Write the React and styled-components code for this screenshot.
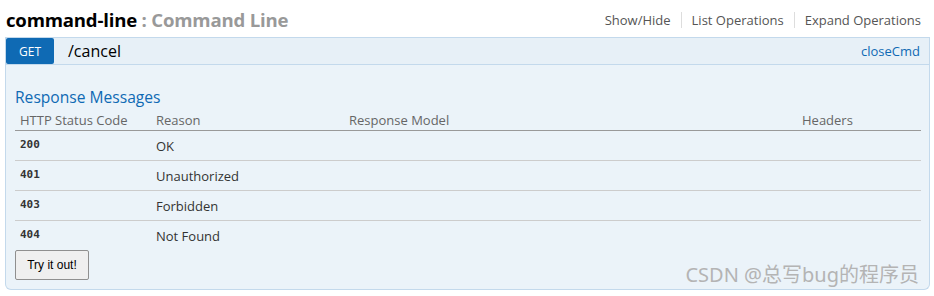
import React from 'react';
import styled, { createGlobalStyle } from 'styled-components';

const GlobalStyle = createGlobalStyle`
  body {
    margin: 0;
    background: #fff;
    font-family: "Open Sans", "Noto Sans", sans-serif;
  }
`;

const responses = [
  { code: '200', reason: 'OK' },
  { code: '401', reason: 'Unauthorized' },
  { code: '403', reason: 'Forbidden' },
  { code: '404', reason: 'Not Found' },
];

const App = () => {
  return (
    <Page>
      <GlobalStyle />
      <ResourceHeader>
        <Title>
          command-line <TitleDesc>: Command Line</TitleDesc>
        </Title>
        <Options>
          <OptionLink>Show/Hide</OptionLink>
          <OptionLink>List Operations</OptionLink>
          <OptionLink>Expand Operations</OptionLink>
        </Options>
      </ResourceHeader>

      <Operation>
        <OpHeading>
          <Method>GET</Method>
          <Path>/cancel</Path>
          <Summary>closeCmd</Summary>
        </OpHeading>
        <OpContent>
          <SectionTitle>Response Messages</SectionTitle>
          <Table>
            <colgroup>
              <col style={{ width: 136 }} />
              <col style={{ width: 193 }} />
              <col style={{ width: 453 }} />
              <col />
            </colgroup>
            <thead>
              <tr>
                <Th>HTTP Status Code</Th>
                <Th>Reason</Th>
                <Th>Response Model</Th>
                <Th>Headers</Th>
              </tr>
            </thead>
            <tbody>
              {responses.map((r, i) => (
                <Row key={r.code} $last={i === responses.length - 1}>
                  <CodeCell>{r.code}</CodeCell>
                  <Td>{r.reason}</Td>
                  <Td />
                  <Td />
                </Row>
              ))}
            </tbody>
          </Table>
          <Footer>
            <TryButton>Try it out!</TryButton>
            <Watermark>CSDN @总写bug的程序员</Watermark>
          </Footer>
        </OpContent>
      </Operation>
    </Page>
  );
};

const Page = styled.div`
  width: 926px;
  padding: 4px 4px 0 5px;
`;

const ResourceHeader = styled.div`
  display: flex;
  align-items: center;
  justify-content: space-between;
  height: 30px;
  padding: 0 10px 0 1px;
  margin-bottom: 3px;
`;

const Title = styled.h2`
  margin: 0;
  font-size: 18.6px;
  font-weight: 700;
  color: #000;
  letter-spacing: -0.2px;
`;

const TitleDesc = styled.span`
  color: #999;
`;

const Options = styled.div`
  display: flex;
  align-items: center;
  padding-top: 2px;
`;

const OptionLink = styled.a`
  font-size: 13px;
  color: #555;
  padding: 0 10px;
  border-left: 1px solid #ddd;
  line-height: 16px;

  &:first-child {
    border-left: none;
  }
  &:last-child {
    padding-right: 0;
  }
`;

const Operation = styled.div`
  width: 925px;
`;

const OpHeading = styled.div`
  display: flex;
  align-items: center;
  height: 26px;
  background: #e7f0f7;
  border: 1px solid #c3d9ec;
  padding-right: 9px;
`;

const Method = styled.span`
  display: flex;
  align-items: center;
  justify-content: center;
  width: 48px;
  height: 26px;
  background: #0f6ab4;
  color: #fff;
  font-size: 12px;
  border-radius: 2px;
`;

const Path = styled.span`
  margin-left: 14px;
  font-size: 16px;
  color: #000;
  flex: 1;
`;

const Summary = styled.span`
  font-size: 13px;
  color: #0f6ab4;
`;

const OpContent = styled.div`
  background: #ebf3f9;
  border: 1px solid #c3d9ec;
  border-top: none;
  border-radius: 0 0 6px 6px;
  padding: 19px 9px 9px 9px;
  height: 196px;
`;

const SectionTitle = styled.h4`
  margin: 0;
  font-size: 15.6px;
  font-weight: 400;
  color: #0f6ab4;
  line-height: 26px;
`;

const Table = styled.table`
  width: 906px;
  table-layout: fixed;
  border-collapse: collapse;
  font-size: 13px;
`;

const Th = styled.th`
  text-align: left;
  font-weight: 400;
  color: #666;
  padding: 2px 5px 0;
  height: 18px;
  line-height: 16px;
  vertical-align: top;
  border-bottom: 1px solid #999;
`;

const Row = styled.tr`
  height: 30px;
  & > td {
    border-bottom: ${(p) => (p.$last ? 'none' : '1px solid #ccc')};
  }
`;

const Td = styled.td`
  padding: 0 5px;
  color: #333;
  vertical-align: middle;
`;

const CodeCell = styled(Td)`
  font-family: "DejaVu Sans Mono", monospace;
  font-size: 11px;
  font-weight: 700;
  color: #333;
  padding-bottom: 2px;
`;

const Footer = styled.div`
  display: flex;
  align-items: flex-start;
  justify-content: space-between;
  margin-top: -1px;
`;

const TryButton = styled.button`
  font-family: "Liberation Sans", Arial, sans-serif;
  font-size: 12px;
  color: #000;
  background: #efefef;
  border: 1px solid #8f8f8f;
  border-radius: 2px;
  height: 30px;
  width: 74px;
  padding: 0;
`;

const Watermark = styled.span`
  margin-top: 10px;
  margin-right: 1px;
  font-family: "Noto Sans", "Noto Sans CJK SC", sans-serif;
  font-size: 20px;
  line-height: 30px;
  color: #b4b4b4;
`;

export default App;
